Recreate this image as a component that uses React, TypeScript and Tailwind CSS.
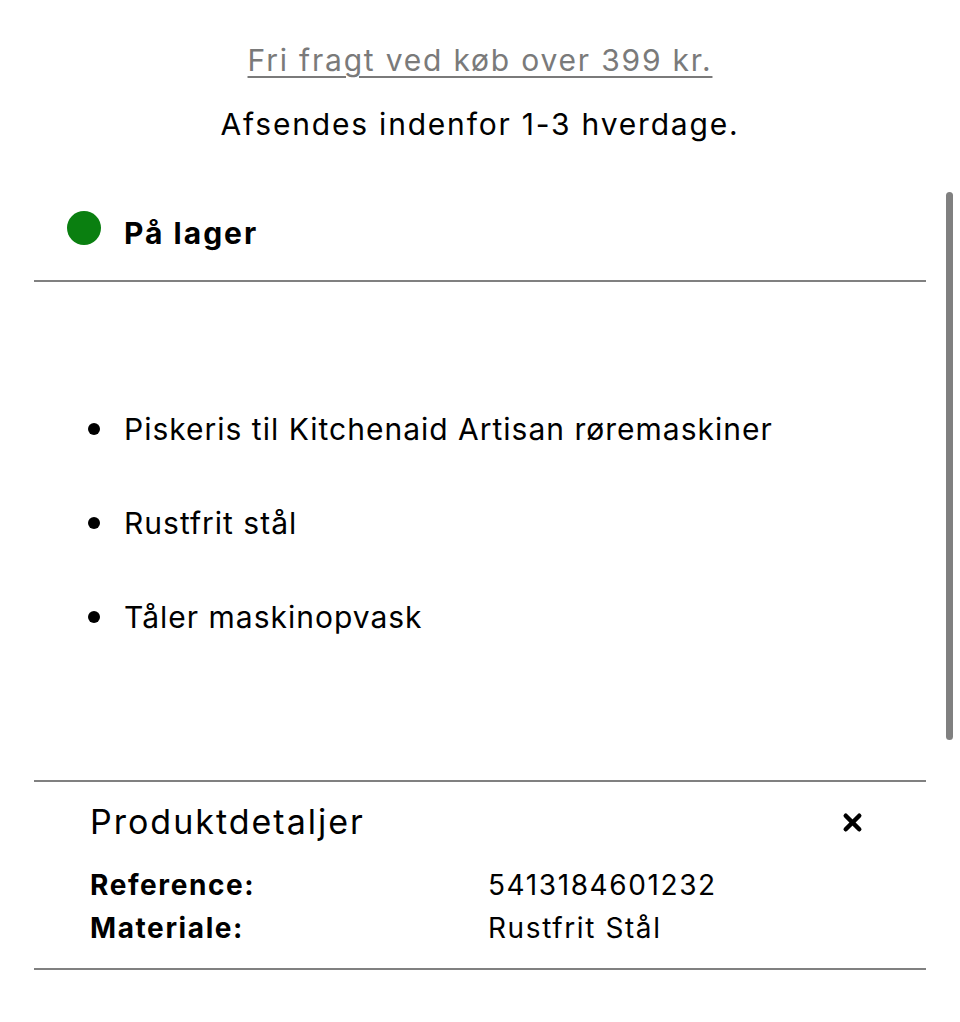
import { X } from "lucide-react";

const bullets = [
  "Piskeris til Kitchenaid Artisan røremaskiner",
  "Rustfrit stål",
  "Tåler maskinopvask",
];

const details = [
  { label: "Reference:", value: "5413184601232" },
  { label: "Materiale:", value: "Rustfrit Stål" },
];

export default function App() {
  return (
    <div className="relative min-h-[1022px] w-full bg-white font-['Inter',sans-serif] text-black">
      {/* shipping info */}
      <div className="flex flex-col items-center pt-10">
        <a className="text-[30px] leading-10 tracking-[1.8px] text-[#7a7a7a] underline decoration-2 underline-offset-[5px]">
          Fri fragt ved køb over 399 kr.
        </a>
        <p className="mt-6 text-[30px] leading-10 tracking-[1.8px]">Afsendes indenfor 1-3 hverdage.</p>
      </div>

      {/* stock */}
      <div className="mx-[34px] flex items-start gap-[23px] border-b-2 border-[#808080] pb-[27px] pl-[33px] pt-[69px]">
        <span className="mt-[-2px] h-[34px] w-[34px] shrink-0 rounded-full bg-[#0a7f10]" />
        <span className="text-[30px] font-bold leading-10 tracking-[2px]">På lager</span>
      </div>

      {/* features */}
      <ul className="flex flex-col gap-[54px] pb-[143px] pl-[88px] pt-[127px]">
        {bullets.map((b) => (
          <li key={b} className="flex items-center gap-[24px] text-[30px] leading-10 tracking-[1px]">
            <span className="h-3 w-3 shrink-0 rounded-full bg-black" />
            {b}
          </li>
        ))}
      </ul>

      {/* product details */}
      <div className="mx-[34px] border-y-2 border-[#808080] pb-[18px] pl-[56px] pr-[60px] pt-[18px]">
        <div className="flex items-center justify-between">
          <h3 className="text-[34px] leading-[44px] tracking-[2px]">Produktdetaljer</h3>
          <X className="h-[27px] w-[27px]" strokeWidth={4} />
        </div>
        <div className="mt-5">
          {details.map((d) => (
            <div key={d.label} className="grid grid-cols-[398px_1fr] text-[28px] leading-[43px] tracking-[1.6px]">
              <span className="font-bold">{d.label}</span>
              <span>{d.value}</span>
            </div>
          ))}
        </div>
      </div>

      {/* scrollbar */}
      <div className="absolute left-[946px] top-[192px] h-[548px] w-[7px] rounded-full bg-[#808080]" />
    </div>
  );
}
